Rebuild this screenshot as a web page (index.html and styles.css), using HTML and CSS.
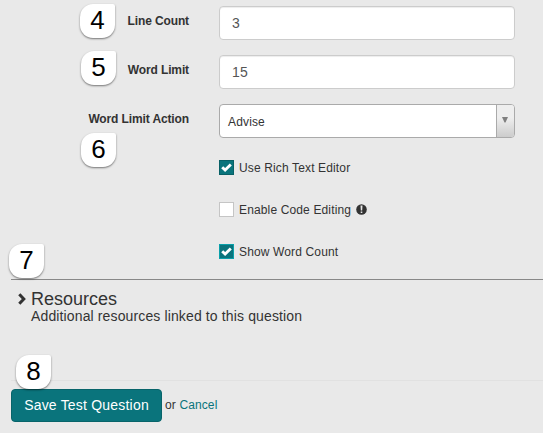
FILE: index.html
```html
<!DOCTYPE html>
<html lang="en">
<head>
<meta charset="utf-8">
<title>Test Question</title>
<link rel="stylesheet" href="styles.css">
</head>
<body>
<form class="form">
  <div class="row">
    <label class="label">Line Count</label>
    <div class="input">3</div>
    <span class="badge b4">4</span>
  </div>
  <div class="row">
    <label class="label">Word Limit</label>
    <div class="input">15</div>
    <span class="badge b5">5</span>
  </div>
  <div class="row">
    <label class="label">Word Limit Action</label>
    <div class="select"><span class="value">Advise</span><span class="arrow"><svg width="6" height="6" viewBox="0 0 6 6"><path d="M0 0h6L3.5 5.5h-1z" fill="#808080"/></svg></span></div>
    <span class="badge b6">6</span>
  </div>
  <div class="checks">
    <div class="check"><span class="box on"><svg width="11" height="9" viewBox="0 0 11 9"><path d="M1.2 4.2 4.1 7 9.8 1.5" fill="none" stroke="#fff" stroke-width="2.9"/></svg></span><span>Use Rich Text Editor</span></div>
    <div class="check"><span class="box"></span><span>Enable Code Editing</span><svg class="info" width="11" height="11" viewBox="0 0 11 11"><circle cx="5.5" cy="5.5" r="5.3" fill="#333"/><path d="M4.5 1.6h2L6.2 6.5H4.8zM4.7 7.5h1.6v1.6H4.7z" fill="#e9e9e9"/></svg></div>
    <div class="check"><span class="box on light"><svg width="11" height="9" viewBox="0 0 11 9"><path d="M1.2 4.2 4.1 7 9.8 1.5" fill="none" stroke="#fff" stroke-width="2.9"/></svg></span><span>Show Word Count</span></div>
  </div>
  <section class="resources">
    <svg class="chevron" width="8" height="12" viewBox="0 0 8 12"><path d="M1.3 1.3 5.8 6 1.3 10.7" fill="none" stroke="#333" stroke-width="3"/></svg>
    <div>
      <h2>Resources</h2>
      <p>Additional resources linked to this question</p>
    </div>
    <span class="badge b7">7</span>
  </section>
  <footer class="actions">
    <div class="save">Save Test Question</div>
    <span class="or">or <a>Cancel</a></span>
    <span class="badge b8">8</span>
  </footer>
</form>
</body>
</html>
```
FILE: styles.css
```css
* { box-sizing: border-box; }
body {
  margin: 0;
  width: 543px;
  height: 433px;
  overflow: hidden;
  background: #e9e9e9;
  color: #333;
  font-family: "Liberation Sans", Arial, sans-serif;
  font-size: 12px;
}
.form { padding-top: 6px; }
.row {
  position: relative;
  display: grid;
  grid-template-columns: 189px 296px;
  column-gap: 30px;
  height: 34px;
  margin-bottom: 15px;
}
.label {
  padding-top: 7px;
  line-height: 16px;
  text-align: right;
  font-weight: bold;
  letter-spacing: -.12px;
  white-space: nowrap;
}
.input {
  height: 34px;
  padding: 0 12px;
  border: 1px solid #ccc;
  border-radius: 4px;
  background: #fff;
  box-shadow: inset 0 1px 1px rgba(0, 0, 0, .075);
  color: #555;
  font-size: 14px;
  letter-spacing: .2px;
  line-height: 33px;
}
.select {
  display: flex;
  height: 34px;
  border: 1px solid #aaa;
  border-radius: 4px;
  background: #fff;
  overflow: hidden;
}
.value { flex: 1; padding-left: 8px; line-height: 34px; letter-spacing: .15px; }
.arrow {
  width: 18px;
  padding: 12px 0 0 5px;
  border-left: 1px solid #aaa;
  background: linear-gradient(#eee 40%, #ccc);
}
.arrow svg { display: block; }
.badge {
  position: absolute;
  width: 35px;
  height: 34px;
  border-radius: 13px 2px 13px 13px;
  background: #fff;
  box-shadow: 0 1px 2px rgba(0, 0, 0, .5);
  color: #000;
  font-size: 26px;
  line-height: 32px;
  text-align: center;
}
.b4 { left: 80px; top: -2px; }
.b5 { left: 81px; top: -4px; }
.b6 { left: 81px; top: 29px; }
.b7 { left: 9px; top: -36px; }
.b8 { left: 16px; top: -26px; }
.checks { margin: 22px 0 0 219px; }
.check {
  display: flex;
  align-items: center;
  height: 15px;
  margin-bottom: 27px;
  line-height: 15px;
  letter-spacing: .14px;
  white-space: nowrap;
}
.box {
  display: flex;
  align-items: center;
  justify-content: center;
  width: 15px;
  height: 15px;
  margin-right: 5px;
  border: 1px solid #c5c5c5;
  background: #fff;
}
.box.on { border-color: #086066; background: #0a747c; }
.box.light { border-color: #0aa0aa; }
.check > span:last-of-type { position: relative; top: 1px; }
.info { margin-left: 5px; }
.resources {
  position: relative;
  display: flex;
  height: 101px;
  margin: -7px 0 0 11px;
  border-top: 1px solid #888;
  padding: 9px 0 0 7px;
}
.chevron { margin: 4px 5px 0 0; }
.resources .b7 { left: -2px; }
h2 { margin: 0; font-size: 18px; font-weight: normal; line-height: 20px; }
p { margin: -1px 0 0; font-size: 14px; line-height: 16px; letter-spacing: .13px; }
.actions {
  position: relative;
  display: flex;
  margin-left: 11px;
  padding-top: 8px;
  border-top: 1px solid #e1e1e1;
}
.save {
  width: 151px;
  height: 33px;
  border: 1px solid #08646a;
  border-radius: 4px;
  background: #0a747c;
  color: #fff;
  font-size: 14px;
  letter-spacing: .2px;
  line-height: 31px;
  text-align: center;
  white-space: nowrap;
}
.or { margin-left: 3px; line-height: 32px; letter-spacing: .12px; }
.or a { color: #0a747c; }
.actions .b8 { left: 5px; }
```
